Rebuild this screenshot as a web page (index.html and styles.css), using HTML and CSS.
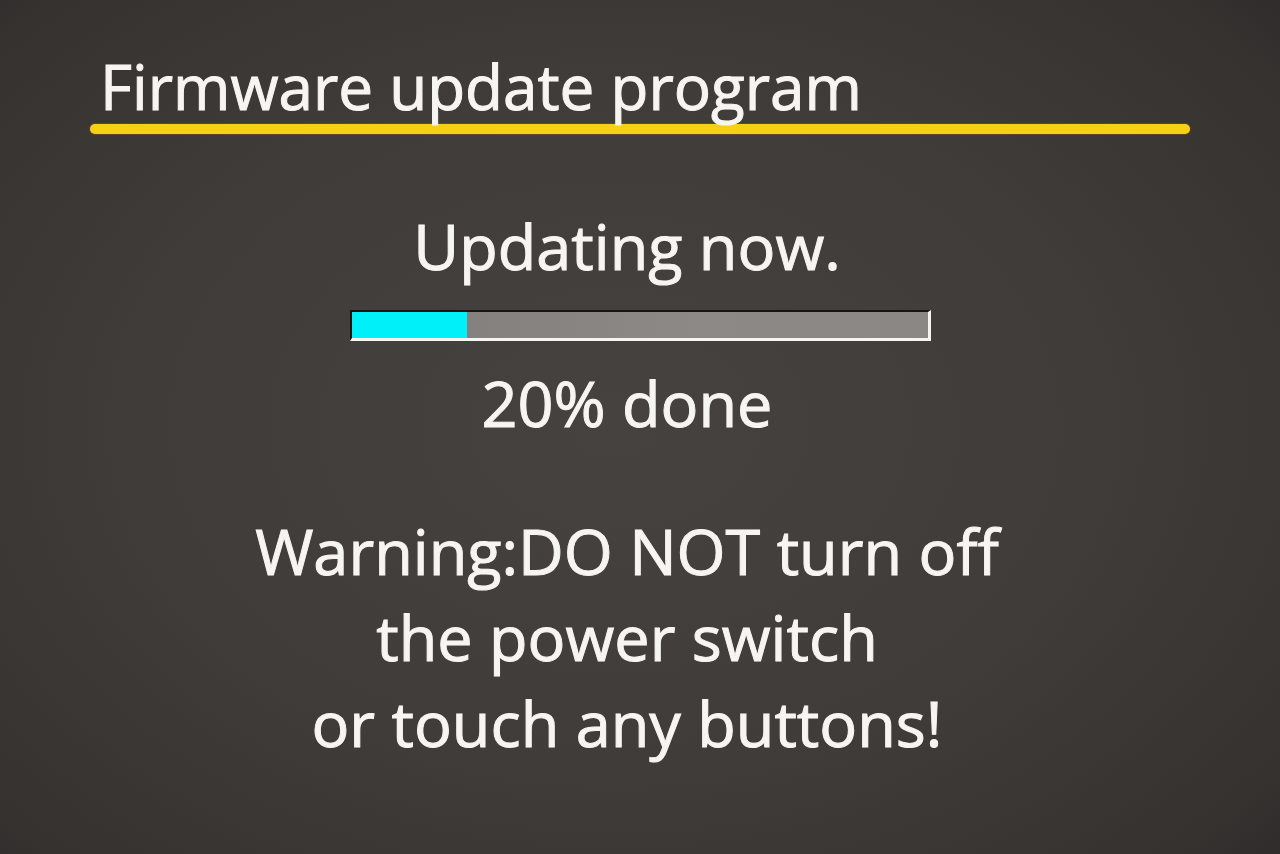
FILE: index.html
```
<!DOCTYPE html>
<html lang="en">
<head>
<meta charset="utf-8">
<title>Firmware update program</title>
<link rel="stylesheet" href="styles.css">
</head>
<body>
<div class="screen">
  <header class="head">
    <h1 class="title">Firmware update program</h1>
    <div class="rule"></div>
  </header>
  <main class="body">
    <p class="line status">Updating now.</p>
    <div class="bar"><div class="fill" style="width:20%"></div></div>
    <p class="line pct">20% done</p>
    <p class="line warn">Warning:DO NOT turn off<br>the power switch<br>or touch any buttons!</p>
  </main>
</div>
</body>
</html>
```
FILE: styles.css
```
html, body {
  margin: 0;
  padding: 0;
}
body {
  width: 1280px;
  height: 854px;
  overflow: hidden;
  font-family: "Open Sans", "Noto Sans", sans-serif;
  color: #f7f5f1;
}
.screen {
  width: 1280px;
  height: 854px;
  box-sizing: border-box;
  background:
    radial-gradient(ellipse 75% 80% at 48% 50%, #454240 0%, #3f3c3a 50%, #353230 85%, #2a2826 100%);
  display: flex;
  flex-direction: column;
}
.head {
  padding: 49px 90px 0 90px;
}
.title {
  margin: 0 0 0 10px;
  font-weight: 400;
  font-size: 62px;
  line-height: 75px;
  letter-spacing: 0;
  -webkit-text-stroke: 1px #f7f5f1;
}
.rule {
  width: 1100px;
  height: 10px;
  border-radius: 5px;
  background: #f6d016;
  box-shadow: 0 0 2px rgba(230, 150, 20, 0.6);
}
.body {
  display: flex;
  flex-direction: column;
  align-items: center;
  padding-right: 26px;
  padding-top: 69px;
}
.line {
  margin: 0;
  font-size: 63px;
  font-weight: 400;
  line-height: 86px;
  text-align: center;
  white-space: nowrap;
  -webkit-text-stroke: 1px #f7f5f1;
}
.bar {
  margin: 21px 0 0 26px;
  width: 581px;
  height: 31px;
  box-sizing: border-box;
  border-top: 2px solid #161514;
  border-left: 2px solid #161514;
  border-bottom: 3px solid #f7f5f2;
  border-right: 3px solid #f7f5f2;
  background: linear-gradient(90deg, #807c7a, #8d8987 60%, #8b8785);
}
.fill {
  height: 100%;
  background: #00f0fa;
}
.pct {
  margin-top: 19px;
}
.warn {
  margin-top: 62px;
}
```
